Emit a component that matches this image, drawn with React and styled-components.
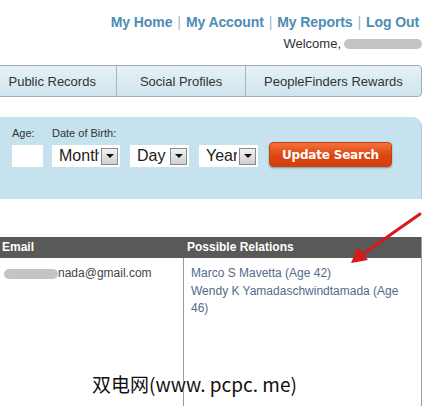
import React from 'react'
import styled, { createGlobalStyle } from 'styled-components'

const GlobalStyle = createGlobalStyle`
  html, body { margin: 0; padding: 0; background: #fff; }
  body { font-family: "Liberation Sans", Arial, sans-serif; }
`

const Page = styled.div`
  position: relative;
  width: 429px;
  height: 406px;
  overflow: hidden;
  background: #fff;
`

const Header = styled.div`
  display: flex;
  flex-direction: column;
  align-items: flex-end;
  padding: 14px 10px 0 0;
`

const TopLinks = styled.div`
  display: flex;
  gap: 5px;
  font-size: 14px;
  line-height: 16px;
  font-weight: bold;
  letter-spacing: -0.1px;
`

const TopLink = styled.a`
  color: #4d8db5;
  text-decoration: none;
`

const Sep = styled.span`
  color: #9bb9cc;
  font-weight: normal;
`

const Welcome = styled.div`
  display: flex;
  align-items: center;
  gap: 3px;
  margin: 6px -3px 0 0;
  font-size: 13px;
  line-height: 15px;
  color: #333;
`

const Blur = styled.span`
  display: inline-block;
  width: ${p => p.$w}px;
  height: 10px;
  border-radius: 5px;
  background: #c4c4c4;
`

const Tabs = styled.div`
  display: flex;
  width: 435px;
  margin: 14px 0 0 -13px;
  height: 32px;
  box-sizing: border-box;
  border: 1px solid #a3acb4;
  border-radius: 4px;
  background: linear-gradient(#e6f1f7, #cfe4ee);
  overflow: hidden;
`

const Tab = styled.div`
  width: ${p => p.$w}px;
  display: flex;
  align-items: center;
  justify-content: center;
  font-size: 13px;
  color: #333;
  border-right: ${p => (p.$last ? 'none' : '1px solid #aab4bb')};
  box-sizing: border-box;
`

const SearchPanel = styled.div`
  width: 422px;
  height: 82px;
  margin-top: 20px;
  box-sizing: border-box;
  background: #c6e2ee;
  border-top-right-radius: 10px;
  border-right: 1px solid #b5cad3;
  padding: 10px 0 0 12px;
  display: flex;
  align-items: flex-start;
  gap: 9px;
`

const Field = styled.div`
  display: flex;
  flex-direction: column;
  gap: 5px;
`

const Label = styled.div`
  font-size: 11px;
  line-height: 13px;
  color: #333;
`

const FieldRow = styled.div`
  display: flex;
  gap: 10px;
  align-items: center;
`

const TextBox = styled.div`
  width: 31px;
  height: 22px;
  background: #fff;
`

const Select = styled.div`
  width: ${p => p.$w}px;
  height: 22px;
  background: #fff;
  display: flex;
  align-items: center;
  box-sizing: border-box;
  padding: 0 2px 0 7px;
`

const SelectText = styled.div`
  flex: 1;
  margin-right: 2px;
  overflow: hidden;
  white-space: nowrap;
  font-size: 16px;
  color: #222;
`

const DropBtn = styled.div`
  width: 17px;
  height: 17px;
  box-sizing: border-box;
  border: 1px solid #8a8a8a;
  background: linear-gradient(#f2f2f2, #cfcfcf);
  display: flex;
  align-items: center;
  justify-content: center;
  &::after {
    content: '';
    border-left: 4px solid transparent;
    border-right: 4px solid transparent;
    border-top: 4px solid #111;
  }
`

const UpdateButton = styled.button`
  margin: 15px 0 0 2px;
  width: 123px;
  height: 25px;
  border: 1px solid #c2410f;
  border-radius: 4px;
  background: linear-gradient(#f6703a, #dc4612 55%, #d23e0c);
  box-shadow: 0 1px 2px rgba(0, 0, 0, 0.35);
  color: #fff;
  font-family: "DejaVu Sans", Verdana, sans-serif;
  font-weight: bold;
  font-size: 12px;
  letter-spacing: -0.2px;
  padding: 0;
`

const Table = styled.div`
  margin-top: 38px;
  width: 422px;
  box-sizing: border-box;
  border-right: 1px solid #9a9a9a;
  height: 169px;
  display: grid;
  grid-template-columns: 183px 1fr;
  grid-template-rows: 21px 1fr;
`

const HeadCell = styled.div`
  background: #595959;
  color: #fff;
  font-weight: bold;
  font-size: 12px;
  line-height: 21px;
  padding-left: ${p => p.$pad}px;
`

const Cell = styled.div`
  font-size: 12px;
  line-height: 17.5px;
  padding: 7px 8px 0 ${p => p.$pad}px;
  color: #444;
  border-left: ${p => (p.$divider ? '1px solid #999' : 'none')};
`

const EmailLine = styled.div`
  display: flex;
  align-items: center;
`

const Relation = styled.div`
  color: #56698a;
`

const Arrow = styled.svg`
  position: absolute;
  left: 345px;
  top: 208px;
`

const Watermark = styled.div`
  position: absolute;
  left: 92px;
  top: 370px;
  font-family: "Noto Sans CJK SC", sans-serif;
  font-size: 19px;
  color: #111;
  text-shadow: 0 0 2px #fff, 0 0 2px #fff;
  white-space: nowrap;
`

export default function App() {
  return (
    <Page>
      <GlobalStyle />
      <Header>
        <TopLinks>
          <TopLink>My Home</TopLink>
          <Sep>|</Sep>
          <TopLink>My Account</TopLink>
          <Sep>|</Sep>
          <TopLink>My Reports</TopLink>
          <Sep>|</Sep>
          <TopLink>Log Out</TopLink>
        </TopLinks>
        <Welcome>
          Welcome, <Blur $w={78} />
        </Welcome>
      </Header>

      <Tabs>
        <Tab $w={130}>Public Records</Tab>
        <Tab $w={129}>Social Profiles</Tab>
        <Tab $w={176} $last>PeopleFinders Rewards</Tab>
      </Tabs>

      <SearchPanel>
        <Field>
          <Label>Age:</Label>
          <TextBox />
        </Field>
        <Field>
          <Label>Date of Birth:</Label>
          <FieldRow>
            <Select $w={68}><SelectText>Month</SelectText><DropBtn /></Select>
            <Select $w={59}><SelectText>Day</SelectText><DropBtn /></Select>
            <Select $w={59}><SelectText>Year</SelectText><DropBtn /></Select>
          </FieldRow>
        </Field>
        <UpdateButton>Update Search</UpdateButton>
      </SearchPanel>

      <Table>
        <HeadCell $pad={2}>Email</HeadCell>
        <HeadCell $pad={4}>Possible Relations</HeadCell>
        <Cell $pad={4}>
          <EmailLine><Blur $w={54} />nada@gmail.com</EmailLine>
        </Cell>
        <Cell $pad={7} $divider>
          <Relation>Marco S Mavetta (Age 42)</Relation>
          <Relation>Wendy K Yamadaschwindtamada (Age 46)</Relation>
        </Cell>
      </Table>

      <Arrow width="84" height="62" viewBox="0 0 84 62">
        <line x1="75" y1="6" x2="18" y2="46" stroke="#d61a1a" strokeWidth="3" strokeLinecap="round" />
        <polygon points="6,55 13,39 23,52" fill="#d61a1a" />
      </Arrow>

      <Watermark>双电网(www. pcpc. me)</Watermark>
    </Page>
  )
}
